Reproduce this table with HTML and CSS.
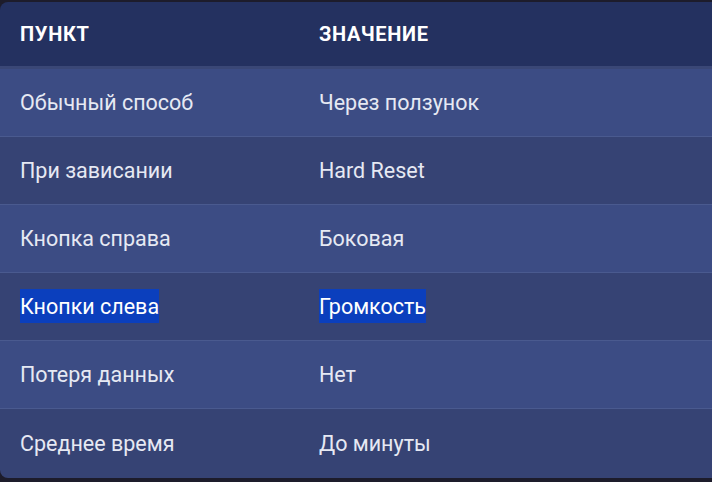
FILE: index.html
```html
<!DOCTYPE html>
<html lang="ru">
<head>
<meta charset="utf-8">
<link rel="stylesheet" href="styles.css">
</head>
<body>
<div class="wrap">
  <table class="tbl">
    <thead>
      <tr><th>Пункт</th><th>Значение</th></tr>
    </thead>
    <tbody>
      <tr><td>Обычный способ</td><td>Через ползунок</td></tr>
      <tr><td>При зависании</td><td>Hard Reset</td></tr>
      <tr><td>Кнопка справа</td><td>Боковая</td></tr>
      <tr><td><span class="sel">Кнопки слева</span></td><td><span class="sel">Громкость</span></td></tr>
      <tr><td>Потеря данных</td><td>Нет</td></tr>
      <tr><td>Среднее время</td><td>До минуты</td></tr>
    </tbody>
  </table>
</div>
</body>
</html>
```
FILE: styles.css
```css
html, body {
  margin: 0;
  padding: 0;
  background: #1d1c2b;
  overflow: hidden;
}
.wrap {
  padding-top: 2px;
  width: 730px;
}
.tbl {
  width: 730px;
  border-collapse: separate;
  border-spacing: 0;
  border-radius: 8px;
  overflow: hidden;
  font-family: Roboto, "Noto Sans", sans-serif;
  table-layout: fixed;
}
.tbl th, .tbl td {
  text-align: left;
  padding: 0 0 0 20px;
}
.tbl th:first-child, .tbl td:first-child {
  width: 279px;
}
.tbl th {
  background: #243160;
  color: #ffffff;
  font-weight: 700;
  font-size: 20px;
  letter-spacing: 0.7px;
  text-transform: uppercase;
  height: 64px;
  border-bottom: 3px solid #3a4776;
}
.tbl td {
  height: 67px;
  font-size: 21.5px;
  color: #e6e9f3;
  border-bottom: 1px solid #4a5a8f;
}
.tbl tbody tr:nth-child(odd) td {
  background: #3c4c84;
}
.tbl tbody tr:nth-child(even) td {
  background: #364374;
}
.tbl tbody tr:last-child td {
  border-bottom: none;
  height: 69px;
}
.sel {
  background: #0b3fbd;
  color: #ffffff;
  padding: 5px 0 4px;
}
```
